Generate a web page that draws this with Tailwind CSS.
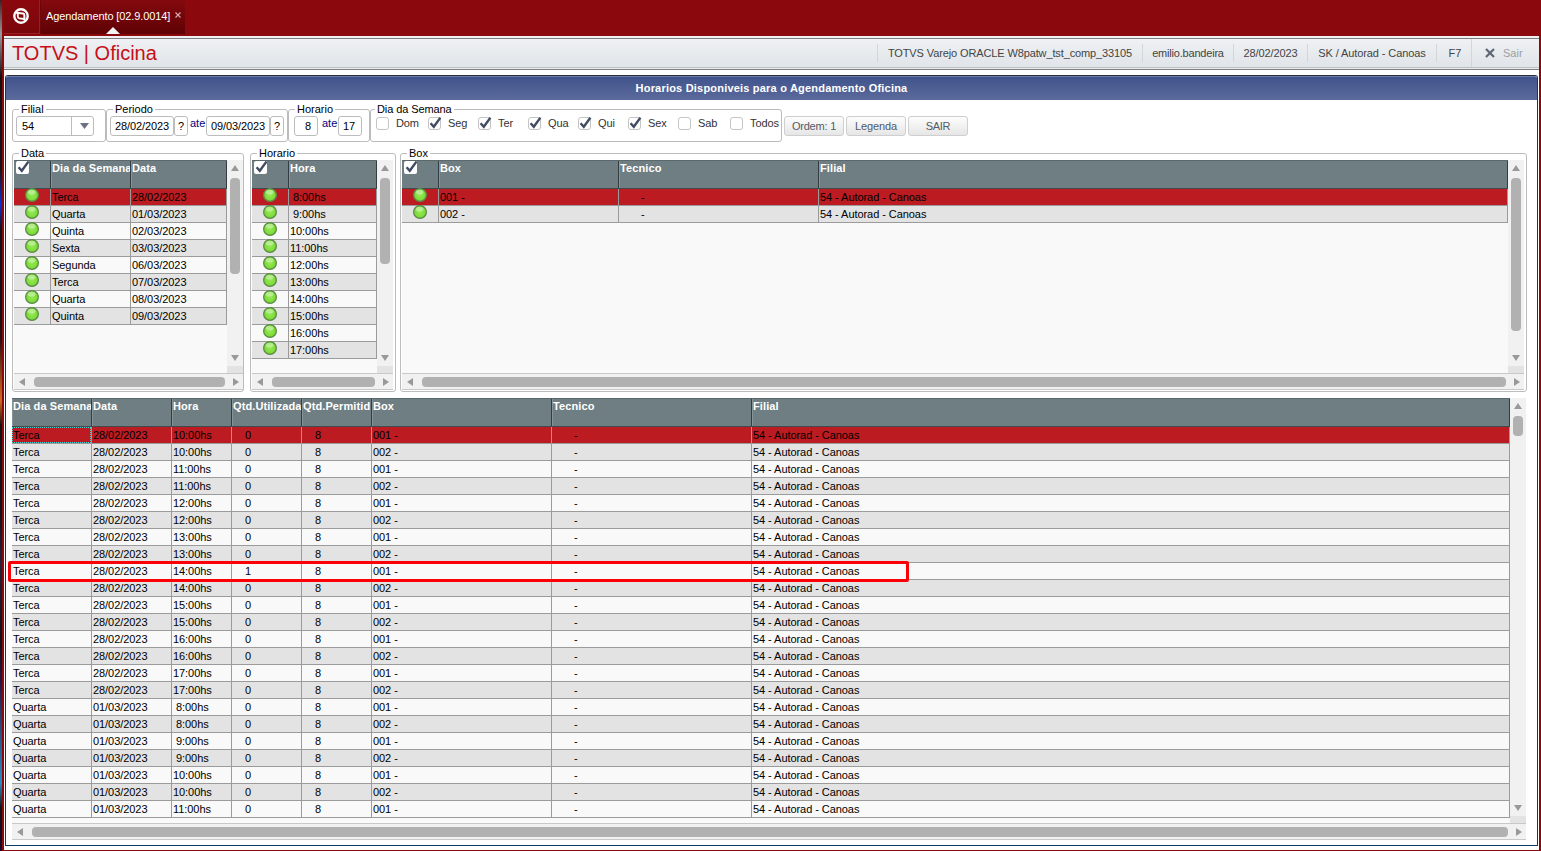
<!DOCTYPE html>
<html lang="pt-BR">
<head>
<meta charset="utf-8">
<title>Agendamento Oficina</title>
<script src="https://cdn.jsdelivr.net/npm/@tailwindcss/browser@4"></script>
</head>
<body class="w-[1541px] h-[851px] overflow-hidden bg-[#8b080d] font-['Liberation_Sans',Arial,sans-serif] text-[11px] leading-[13px] text-black">
<svg class="absolute size-0">
  <defs>
    <radialGradient id="lampFill" cx="0.5" cy="0.5" r="0.55">
      <stop offset="0" stop-color="#95e957"/><stop offset="0.7" stop-color="#7edc38"/><stop offset="1" stop-color="#5cb520"/>
    </radialGradient>
    <symbol id="lamp" viewBox="0 0 14 14">
      <circle cx="7" cy="7" r="6.4" fill="url(#lampFill)" stroke="#5d8a4a" stroke-width="1.2"/>
      <ellipse cx="6.6" cy="4.2" rx="3.8" ry="2.4" fill="#fff" opacity=".4"/>
    </symbol>
    <symbol id="tick" viewBox="0 0 14 16">
      <path d="M2.600 8.200 5.800 11.800 12.400 2.600" fill="none" stroke="#414b61" stroke-width="2.400"/>
    </symbol>
    <symbol id="up" viewBox="0 0 8 6"><path d="M4 0 8 6H0z" fill="#999"/></symbol>
    <symbol id="down" viewBox="0 0 8 6"><path d="M0 0H8L4 6z" fill="#999"/></symbol>
    <symbol id="left" viewBox="0 0 6 8"><path d="M6 0V8L0 4z" fill="#999"/></symbol>
    <symbol id="right" viewBox="0 0 6 8"><path d="M0 0V8L6 4z" fill="#999"/></symbol>
  </defs>
</svg>
<div class="relative flex h-[851px] w-[1541px]">
  <div class="w-[2px] shrink-0 bg-[linear-gradient(180deg,#3a2027_0,#999_4%,#111_9%,#151515_20%,#0a2fd0_24%,#111_27%,#111_36%,#2a1010_40%,#d06a20_47%,#111_50%,#111_60%,#26233a_66%,#111_75%,#261440_80%,#2a8ac0_92%,#111_95%,#180828_100%)]"></div>
  <div class="flex w-[1539px] flex-col pl-[2px] pr-[2px]">
    <!-- tab bar -->
    <div class="flex h-[36px] shrink-0 items-start">
      <div class="flex h-[34px] w-[36px] items-center justify-center border-r border-b border-[#a63a3e]/50 bg-gradient-to-b from-[#8b080d] to-[#7a070b] pr-[1px] pb-[1px]">
        <svg class="size-[16px]" viewBox="0 0 16 16"><circle cx="8" cy="8" r="6.700" fill="none" stroke="#fff" stroke-width="2.400"/><path d="M3 4.800 10 5.600Q11.400 5.800 11.400 7.200V12.500" fill="none" stroke="#fff" stroke-width="2"/><path d="M4.800 5V8.600Q4.800 10.200 6.400 10.400L11.400 11" fill="none" stroke="#fff" stroke-width="1.800"/></svg>
      </div>
      <div class="relative flex h-[34px] w-[145px] items-start border-l border-[#6d060a] bg-gradient-to-b from-[#840a0e] to-[#5f0205] pl-[5px] pt-[10px] text-white">
        <span class="w-[124px] whitespace-nowrap tracking-[-0.100px]">Agendamento [02.9.0014]</span>
        <svg class="ml-[5px] mt-[2px] size-[6px]" viewBox="0 0 6 6"><path d="M0.500 0.500 5.500 5.500M5.500 0.500 0.500 5.500" stroke="#d9aeb0" stroke-width="1.100"/></svg>
        <svg class="absolute left-[65px] top-[27px] h-[7px] w-[14px]" viewBox="0 0 14 7"><path d="M7 0 14 7H0z" fill="#f4f4f4"/></svg>
      </div>
    </div>
    <!-- application bar -->
    <div class="mb-[1px] flex min-h-0 flex-1 flex-col bg-white">
      <div class="flex h-[34px] shrink-0 border-t-2 border-[#f0f0f0]">
        <div class="flex w-full items-center border-t border-b border-[#7e8084] bg-gradient-to-b from-[#eff1f4] to-[#dfe4e8] shadow-[inset_0_-1px_0_#e8eaec,inset_0_-2px_0_#b9c0c3] pb-[2px] text-[#444]">
          <h1 class="-mt-px flex-1 pl-[8px] text-[20px] leading-[24px] text-[#c60f17]">TOTVS | Oficina</h1>
          <div class="flex h-[18px] w-[265px] items-center justify-center whitespace-nowrap border-l border-[#d2d6d8] tracking-[-0.120px]">TOTVS Varejo ORACLE W8patw_tst_comp_33105</div>
          <div class="flex h-[18px] w-[91px] items-center justify-center border-l border-[#d2d6d8] tracking-[-0.200px]">emilio.bandeira</div>
          <div class="flex h-[18px] w-[74px] items-center justify-center border-l border-[#d2d6d8] tracking-[-0.100px]">28/02/2023</div>
          <div class="flex h-[18px] w-[129px] items-center justify-center whitespace-nowrap border-l border-[#d2d6d8] tracking-[-0.100px]">SK / Autorad - Canoas</div>
          <div class="flex h-[18px] w-[35px] items-center justify-center border-l border-[#d2d6d8] pl-[2px]">F7</div>
          <div class="flex h-[28px] w-[68px] items-center border-l border-[#d2d6d8] pl-[13px] text-[#9a9da3]">
            <svg class="mr-[8px] size-[10px]" viewBox="0 0 10 10"><path d="M1 1 9 9M9 1 1 9" stroke="#5d6673" stroke-width="2.200"/></svg>Sair
          </div>
        </div>
      </div>
      <!-- dialog -->
      <div class="mx-[1px] mt-[5px] mb-[4px] flex flex-1 flex-col rounded-t-[3px] border border-[#0d3a63] border-t-[#2a2c38]">
        <div class="flex h-[24px] shrink-0 items-center justify-center rounded-t-[2px] border-t border-[#6b7cac] bg-gradient-to-b from-[#40548c] to-[#5c6a9c] font-bold tracking-[0.200px] text-white">Horarios Disponiveis para o Agendamento Oficina</div>
        <!-- filters -->
        <div class="ml-[6px] mt-[9px] flex h-[33px] items-start">
          <div class="relative flex h-[33px] w-[94px] rounded-[3px] border border-[#bcbcbc] pl-[3px] pt-[6px]">
            <span class="absolute -top-[7px] left-[6px] bg-white px-[2px]">Filial</span>
            <div class="flex h-[20px] w-[78px] items-center rounded-[3px] border border-[#bcbcbc]">
              <span class="w-[54px] pl-[5px]">54</span>
              <span class="flex h-full flex-1 items-center justify-center border-l border-[#bcbcbc] pl-[3px]"><svg class="h-[6px] w-[9px]" viewBox="0 0 8 6" preserveAspectRatio="none"><path d="M0 0H8L4 6z" fill="#6b7180"/></svg></span>
            </div>
          </div>
          <div class="relative flex h-[33px] w-[182px] rounded-[3px] border border-[#bcbcbc] pl-[3px] pt-[6px]">
            <span class="absolute -top-[7px] left-[6px] bg-white px-[2px]">Periodo</span>
            <div class="flex h-[20px] w-[64px] items-center rounded-[3px] border border-[#bcbcbc] pl-[4px] tracking-[-0.100px]">28/02/2023</div>
            <div class="flex h-[20px] w-[14px] items-center justify-center rounded-[3px] border border-[#bcbcbc]">?</div>
            <div class="w-[18px] pl-[2px] pt-px text-[#00007f]">ate</div>
            <div class="flex h-[20px] w-[64px] items-center rounded-[3px] border border-[#bcbcbc] pl-[4px] tracking-[-0.100px]">09/03/2023</div>
            <div class="flex h-[20px] w-[14px] items-center justify-center rounded-[3px] border border-[#bcbcbc]">?</div>
          </div>
          <div class="relative flex h-[33px] w-[82px] rounded-[3px] border border-[#bcbcbc] pl-[5px] pt-[6px]">
            <span class="absolute -top-[7px] left-[6px] bg-white px-[2px]">Horario</span>
            <div class="flex h-[20px] w-[24px] items-center rounded-[3px] border border-[#bcbcbc] pl-[10px]">8</div>
            <div class="w-[20px] pl-[4px] pt-px text-[#00007f]">ate</div>
            <div class="flex h-[20px] w-[24px] items-center rounded-[3px] border border-[#bcbcbc] pl-[4px]">17</div>
          </div>
          <div class="relative flex h-[33px] w-[412px] rounded-[3px] border border-[#bcbcbc] pl-[5px] pt-[7px] text-[#333]">
            <span class="absolute -top-[7px] left-[4px] bg-white px-[2px] tracking-[-0.100px] text-black">Dia da Semana</span>
            <div id="days" class="flex"></div>
          </div>
          <div class="ml-[2px] flex gap-[2px] pt-[7px] text-[#555a66]">
            <div class="flex h-[20px] w-[60px] items-center justify-center rounded-[3px] border border-[#cfcfcf] bg-gradient-to-b from-[#fdfdfd] to-[#e6e6e6] tracking-[-0.200px]">Ordem: 1</div>
            <div class="flex h-[20px] w-[60px] items-center justify-center rounded-[3px] border border-[#cfcfcf] bg-gradient-to-b from-[#fdfdfd] to-[#e6e6e6] tracking-[-0.100px]">Legenda</div>
            <div class="flex h-[20px] w-[60px] items-center justify-center rounded-[3px] border border-[#cfcfcf] bg-gradient-to-b from-[#fdfdfd] to-[#e6e6e6] tracking-[-0.300px]">SAIR</div>
          </div>
        </div>
        <!-- group boxes -->
        <div id="groups" class="ml-[6px] mt-[11px] flex h-[239px]"></div>
        <!-- result grid -->
        <div id="result" class="ml-[6px] mt-[6px] flex h-[442px] w-[1514px]"></div>
      </div>
    </div>
  </div>
  <div class="absolute left-[8px] top-[561px] h-[21px] w-[901px] rounded-[2px] border-[3px] border-[#fb0007]"></div>
</div>
<script>
const tick = '<svg class="absolute -top-[3px] -left-px h-[16px] w-[14px]"><use href="#tick"/></svg>';
document.getElementById('days').innerHTML = [['Dom',0,52],['Seg',1,50],['Ter',1,50],['Qua',1,50],['Qui',1,50],['Sex',1,50],['Sab',0,52],['Todos',0,50]]
  .map(([n,c,w]) => `<div class="flex" style="width:${w}px"><span class="relative mr-[7px] size-[13px] shrink-0 rounded-[3px] border border-[#c4c4c4] bg-white">${c ? tick : ''}</span><span class="tracking-[-0.100px]">${n}</span></div>`).join('');

const ROW = { sel: 'flex h-[17px] bg-[#bc1c21]', odd: 'flex h-[17px] bg-[#e3e3e3]', even: 'flex h-[17px] bg-[#f9f9f9]' };
function grid(cols, rows, focus) {
  const head = cols.map(([t, w]) => t === '*'
    ? `<div class="border-r border-[#333c3f]" style="width:${w}px"><div class="relative ml-[2px] size-[13px] rounded-[2px] bg-white"><svg class="absolute -top-[2px] left-0 h-[16px] w-[14px]"><use href="#tick"/></svg></div></div>`
    : `<div class="overflow-hidden whitespace-nowrap border-r border-[#333c3f] pl-px pt-[1px] font-bold tracking-[0.100px] text-white shadow-[inset_1px_0_0_#869497]" style="width:${w}px">${t}</div>`).join('');
  const body = rows.map((r, i) => `<div class="${i === 0 ? ROW.sel : i % 2 ? ROW.odd : ROW.even}">` + r.map((c, j) =>
    c === '*'
      ? `<div class="flex justify-center border-r border-b border-[#9b9b9b] pr-px" style="width:${cols[j][1]}px"><svg class="relative -top-px size-[14px]"><use href="#lamp"/></svg></div>`
      : `<div class="relative whitespace-pre border-r border-b border-[#9b9b9b] pt-[2px] tracking-[-0.060px]" style="width:${cols[j][1]}px;padding-left:${cols[j][2] ?? 1}px">${focus && !i && !j ? '<span class="absolute inset-0 border border-dotted border-[#4fd0d0]"></span>' : ''}${c}</div>`).join('') + '</div>').join('');
  return `<div class="flex-1 overflow-hidden"><div class="flex h-[29px] border-t border-b border-t-[#5b686b] border-b-[#414b4e] bg-[#6f7e82]">${head}</div>${body}</div>`;
}
function pane(g, len) {
  return `<div class="flex min-h-0 flex-1 flex-col bg-[#f9f9f9]">
    <div class="flex min-h-0 flex-1">${g}
      <div class="flex w-[16px] shrink-0 flex-col items-center bg-[#f1f1f1]">
        <svg class="mt-[5px] h-[6px] w-[8px]"><use href="#up"/></svg>
        <div class="mt-[7px] w-[10px] rounded-[4px] bg-[#b1b1b1]" style="height:${len}px"></div>
        <svg class="mt-auto mb-[5px] h-[6px] w-[8px]"><use href="#down"/></svg>
        <div class="h-[7px] w-full bg-[#e3e3e3]"></div>
      </div>
    </div>
    <div class="flex h-[17px] shrink-0 items-center border-t border-b border-[#c8c8c8] bg-[#f1f1f1] pl-[5px] pr-[4px]">
      <svg class="h-[8px] w-[6px]"><use href="#left"/></svg>
      <div class="ml-[9px] mr-[8px] h-[10px] flex-1 rounded-[4px] bg-[#b1b1b1]"></div>
      <svg class="h-[8px] w-[6px]"><use href="#right"/></svg>
    </div></div>`;
}
function box(title, width, gap, padRight, g, len) {
  return `<div class="relative flex h-[239px] rounded-[3px] border border-[#bcbcbc] pl-px pt-[6px] pb-px" style="width:${width}px;margin-right:${gap}px;padding-right:${padRight}px"><span class="absolute -top-[7px] left-[6px] bg-white px-[2px]">${title}</span>${pane(g, len)}</div>`;
}
const dates = [['Terca','28/02/2023'],['Quarta','01/03/2023'],['Quinta','02/03/2023'],['Sexta','03/03/2023'],['Segunda','06/03/2023'],['Terca','07/03/2023'],['Quarta','08/03/2023'],['Quinta','09/03/2023']];
const hour = h => (h < 10 ? ' ' : '') + h + ':00hs';
const F = '54 - Autorad - Canoas';
document.getElementById('groups').innerHTML =
  box('Data', 232, 6, 0, grid([['*',37],['Dia da Semana',80],['Data',96]], dates.map(d => ['*', ...d])), 96) +
  box('Horario', 146, 4, 2, grid([['*',37],['Hora',88]], [8,9,10,11,12,13,14,15,16,17].map(h => ['*', hour(h)])), 86) +
  box('Box', 1127, 0, 2, grid([['*',37],['Box',180],['Tecnico',200,22],['Filial',689]], [['*','001 -','-',F],['*','002 -','-',F]]), 153);

const rows = [];
const add = (d, dt, h) => ['001 -','002 -'].forEach(b => rows.push([d, dt, hour(h), d === 'Terca' && h === 14 && b === '001 -' ? '1' : '0', '8', b, '-', F]));
for (let h = 10; h <= 17; h++) add('Terca', '28/02/2023', h);
for (let h = 8; h <= 11; h++) add('Quarta', '01/03/2023', h);
document.getElementById('result').innerHTML = pane(grid([['Dia da Semana',80],['Data',80],['Hora',60],['Qtd.Utilizada',70,13],['Qtd.Permitid',70,13],['Box',180],['Tecnico',200,22],['Filial',758]], rows.slice(0, 23), true), 20);
</script>
</body>
</html>
